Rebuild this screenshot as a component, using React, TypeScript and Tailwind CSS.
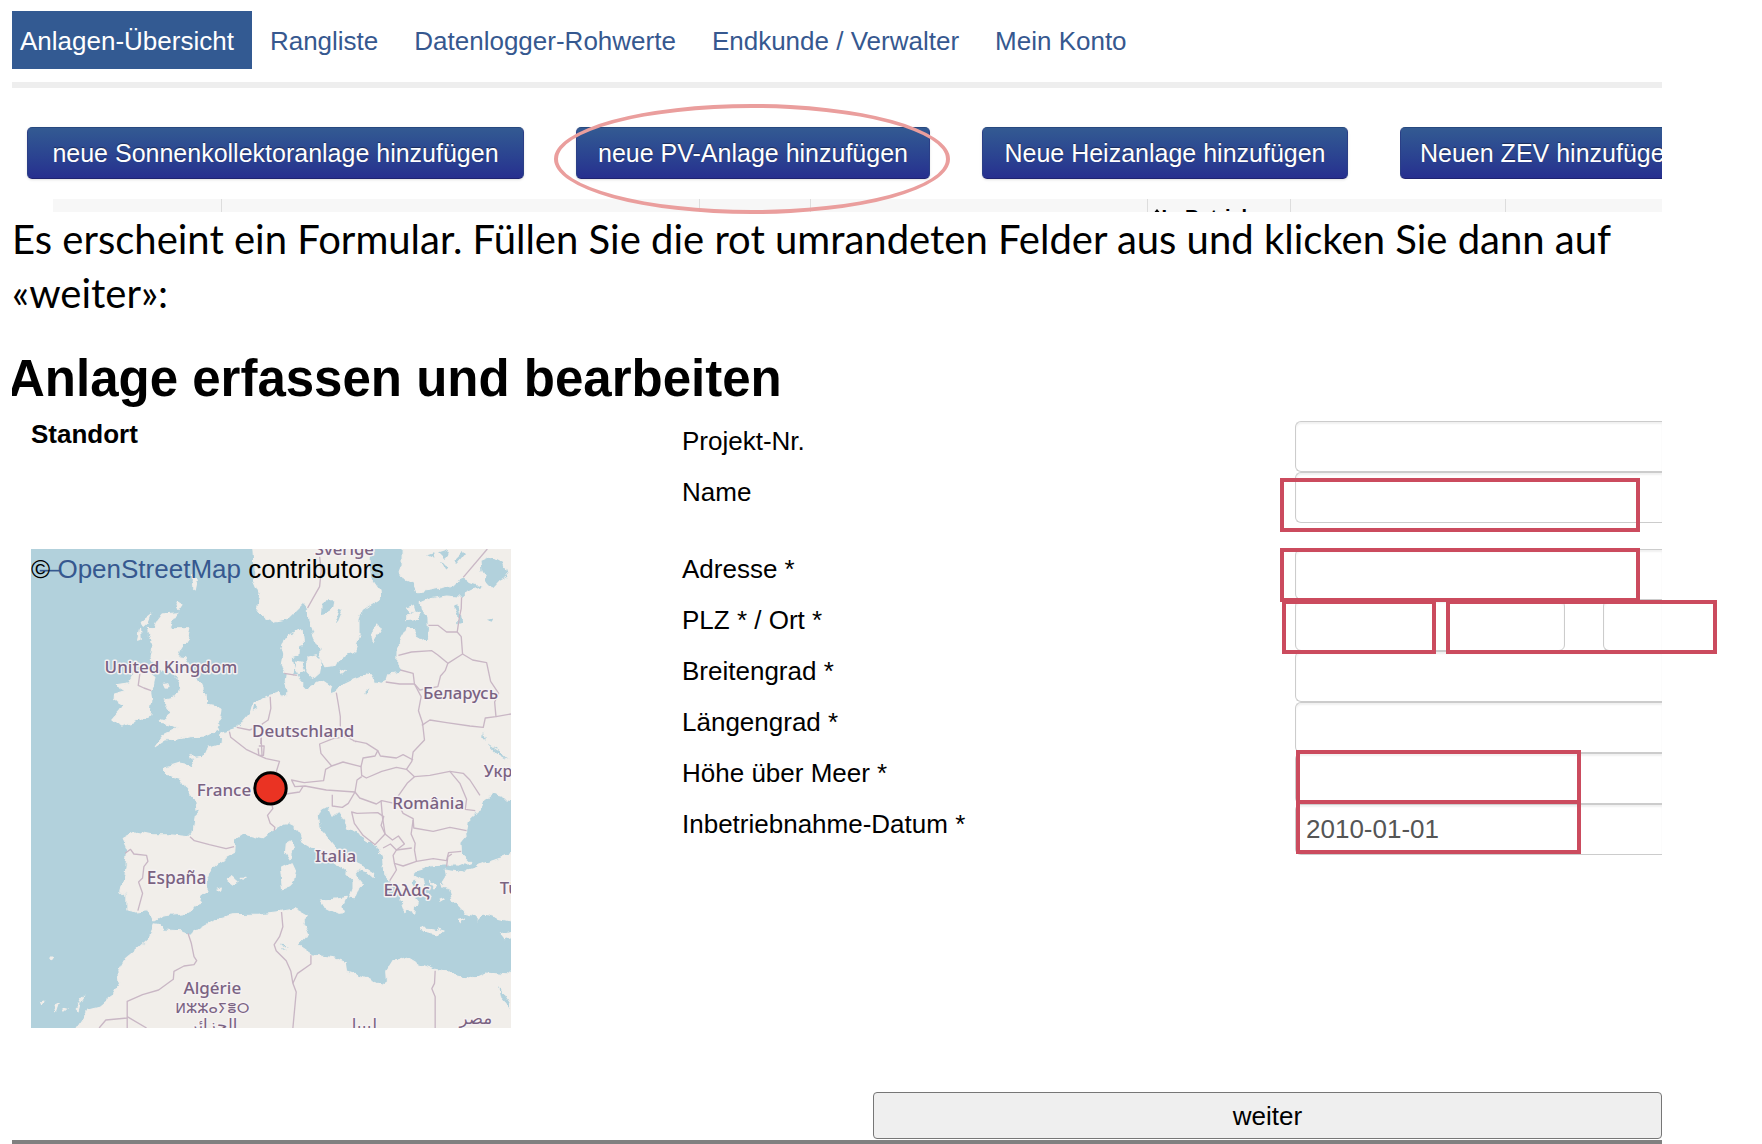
import React from "react";

const NAV = ["Anlagen-Übersicht", "Rangliste", "Datenlogger-Rohwerte", "Endkunde / Verwalter", "Mein Konto"];

const BUTTON =
  "h-[52px] whitespace-nowrap rounded-[5px] border border-t-[#27497f] border-x-[#2b3f86] border-b-[#1f2370] bg-linear-to-b from-[#335a92] to-[#272f8f] text-[25px] leading-8 text-white shadow-sm [text-shadow:0_-1px_1px_rgba(0,0,0,0.4)]";

const MARK = "pointer-events-none absolute z-10 border-4 border-[#cb4b5e]";

const INPUT =
  "block h-[51px] border border-[#cccccc] bg-transparent px-[10px] text-[26px] text-[#555555] shadow-[inset_0_2px_2px_rgba(0,0,0,0.06)] outline-none";

const SEA = "#b2d1dc";
const LAND = "#f1eeea";

const LAND_PATHS = [
  // continental Europe
  "M1147,20 L1147,70 L1138,96 L1152,120 L1180,132 L1190,155 L1230,150 L1290,137 L1330,117 L1352,128 L1392,140 L1360,150 L1338,160 L1325,172 L1280,168 L1232,176 L1204,188 L1208,215 L1224,230 L1226,270 L1222,296 L1202,302 L1190,286 L1180,268 L1160,262 L1142,295 L1135,330 L1134,372 L1143,396 L1108,402 L1103,420 L1085,430 L1063,426 L1058,408 L1040,405 L1005,418 L965,438 L948,456 L930,462 L936,440 L912,424 L880,434 L860,446 L840,424 L832,404 L815,405 L824,384 L818,352 L838,345 L840,318 L852,314 L848,268 L820,285 L794,296 L784,322 L790,346 L785,375 L800,400 L797,428 L806,455 L787,470 L780,456 L757,462 L735,468 L700,492 L692,520 L668,548 L640,570 L608,580 L605,610 L565,622 L552,652 L525,655 L512,640 L524,680 L480,672 L433,686 L445,706 L482,715 L500,745 L526,776 L530,812 L541,817 L528,830 L520,880 L510,890 L450,884 L400,884 L347,874 L309,895 L325,930 L318,1000 L305,1052 L320,1066 L320,1110 L352,1116 L385,1112 L400,1142 L412,1142 L432,1128 L508,1120 L528,1094 L544,1090 L548,1066 L566,1052 L556,1030 L572,990 L602,964 L646,940 L648,898 L672,882 L728,896 L760,872 L795,852 L808,852 L828,862 L842,880 L850,910 L895,936 L935,962 L975,992 L1000,1020 L1000,1046 L990,1074 L1004,1076 L1018,1040 L1028,1030 L1010,1008 L1024,990 L1042,996 L1060,1012 L1062,1000 L1040,985 L1010,970 L990,956 L968,945 L945,918 L922,888 L903,868 L896,832 L905,810 L928,798 L940,826 L954,812 L974,836 L990,866 L1030,890 L1075,920 L1088,950 L1092,1000 L1112,1022 L1130,1050 L1148,1090 L1158,1118 L1170,1108 L1182,1126 L1184,1100 L1198,1092 L1178,1066 L1200,1060 L1178,1030 L1185,1015 L1215,1048 L1206,1020 L1180,1006 L1184,990 L1230,978 L1284,974 L1330,976 L1352,968 L1322,940 L1320,905 L1340,880 L1345,845 L1370,822 L1390,784 L1420,760 L1445,765 L1460,780 L1485,782 L1485,20 Z",
  // Scandinavia
  "M700,20 L704,90 L702,120 L722,165 L712,200 L738,232 L765,247 L800,240 L852,188 L866,205 L868,245 L884,290 L904,330 L904,358 L916,380 L950,376 L962,352 L1000,338 L1018,290 L1018,238 L1028,212 L1080,178 L1078,150 L1052,112 L1048,60 L1050,20 Z",
  // Anatolia
  "M1485,935 L1440,955 L1400,968 L1350,985 L1310,995 L1276,990 L1280,1008 L1270,1024 L1290,1050 L1300,1084 L1320,1100 L1334,1120 L1360,1126 L1376,1142 L1396,1122 L1440,1136 L1485,1146 Z",
  // Africa
  "M405,1154 L388,1196 L350,1230 L318,1256 L296,1296 L300,1330 L276,1372 L240,1402 L206,1410 L190,1440 L165,1475 L1485,1475 L1485,1304 L1400,1296 L1356,1316 L1290,1300 L1244,1290 L1196,1272 L1160,1250 L1120,1264 L1104,1290 L1106,1320 L1084,1336 L1040,1316 L984,1296 L980,1268 L945,1254 L880,1244 L836,1214 L856,1194 L864,1180 L850,1146 L866,1126 L848,1116 L830,1106 L785,1114 L720,1122 L640,1124 L590,1136 L558,1156 L515,1180 L488,1172 L435,1170 L418,1156 Z",
  // Great Britain
  "M428,222 L476,218 L462,240 L452,266 L512,266 L504,298 L484,328 L478,350 L500,354 L514,380 L520,408 L545,430 L560,462 L562,490 L590,494 L608,508 L604,535 L588,556 L598,570 L560,588 L515,590 L470,598 L438,600 L408,620 L440,578 L474,562 L452,552 L420,546 L454,520 L436,498 L440,480 L470,474 L482,440 L470,420 L472,402 L440,400 L418,385 L395,350 L404,318 L392,310 L400,295 L384,282 L382,268 L404,272 L410,246 Z",
  // Ireland
  "M344,400 L385,392 L410,412 L406,434 L394,452 L398,480 L392,525 L345,545 L302,558 L278,540 L300,515 L312,495 L285,480 L286,462 L320,452 L290,434 L330,428 Z",
  "M395,222 L386,248 L372,262 L366,244 Z",
  "M364,268 L366,295 L358,298 Z",
  "M475,186 L488,194 L476,212 L470,200 Z",
  "M520,110 L534,120 L528,150 L516,138 Z",
  "M432,430 L446,428 L438,442 Z",
  // Danish and Swedish islands
  "M830,366 L848,370 L856,392 L838,404 L826,388 Z",
  "M862,352 L890,344 L905,366 L900,396 L882,412 L862,392 Z",
  "M1074,252 L1082,266 L1060,302 L1054,280 Z",
  "M1024,284 L1008,332 L1004,336 L1016,290 Z",
  "M962,388 L974,394 L966,400 Z",
  "M1158,222 L1188,214 L1202,222 L1180,240 L1158,242 Z",
  "M1160,204 L1184,196 L1188,210 L1168,214 Z",
  // Mediterranean islands
  "M816,902 L822,930 L812,958 L798,936 L800,912 Z",
  "M818,968 L828,990 L822,1026 L808,1040 L792,1046 L786,984 Z",
  "M902,1080 L940,1078 L980,1072 L970,1096 L974,1118 L955,1120 L915,1100 Z",
  "M1204,1164 L1240,1166 L1276,1176 L1250,1184 L1210,1176 Z",
  "M1444,1182 L1485,1170 L1485,1188 L1455,1196 Z",
  "M624,1022 L642,1010 L656,1022 L644,1036 Z",
  "M596,1048 L606,1044 L604,1054 Z",
  "M665,1012 L680,1012 L674,1018 Z",
  "M1318,1138 L1334,1134 L1322,1150 Z",
  "M1228,1024 L1250,1036 L1244,1046 Z",
  "M1262,1030 L1280,1036 L1266,1042 Z",
  "M1222,1060 L1234,1066 L1226,1072 Z",
  "M1258,1070 L1270,1078 L1260,1084 Z",
  // Canary Islands and Madeira
  "M92,1254 L104,1254 L98,1262 Z",
  "M102,1396 L118,1388 L110,1412 Z",
  "M130,1404 L144,1408 L136,1416 Z",
  "M174,1404 L186,1388 L180,1410 Z",
  "M184,1376 L196,1372 L188,1384 Z",
  "M70,1382 L78,1380 L74,1392 Z",
];

const LAKES = [
  "M904,222 L906,196 L922,184 L944,184 L940,206 L916,220 Z",
  "M962,206 L970,210 L954,250 L946,256 Z",
  "M1382,62 L1410,50 L1450,72 L1462,110 L1440,122 L1420,144 L1400,120 L1384,92 Z",
  "M1302,200 L1316,196 L1324,246 L1312,250 L1312,222 Z",
  "M1404,236 L1424,232 L1418,242 Z",
  "M1392,570 L1398,600 L1390,590 Z",
  "M1404,612 L1440,636 L1466,660 L1430,640 Z",
  "M1255,40 L1285,30 L1275,60 Z",
  "M1300,60 L1330,30 L1338,40 L1312,72 Z",
  "M1260,66 L1286,80 L1274,90 Z",
  "M1222,46 L1240,40 L1244,56 Z",
  "M1440,1340 L1452,1360 L1473,1396 L1473,1406 L1448,1376 Z",
  "M1034,458 L1050,444 L1036,464 Z",
  "M704,496 L714,504 L700,512 Z",
  "M1302,985 L1330,972 L1374,982 L1340,992 Z",
  "M784,1214 L812,1216 L790,1220 Z",
  "M784,1228 L804,1230 L788,1232 Z",
];

const BORDERS = [
  "M362,400 L357,436 L374,444 L396,452",
  "M900,50 L905,90 L900,140 L880,175 L864,204",
  "M1402,27 L1330,112",
  "M1325,172 L1324,205 L1318,235 L1312,276 L1280,276 L1254,256 L1226,256",
  "M1312,276 L1324,290 L1328,342 L1284,370 L1254,345 L1236,332 L1175,336 L1136,346",
  "M1328,342 L1358,360 L1400,368 L1412,424 L1436,460 L1424,486 L1428,530 L1396,534 L1390,562 L1350,558 L1280,548 L1230,540 L1206,556",
  "M1428,530 L1473,522",
  "M1284,370 L1276,392 L1262,408 L1254,440 L1200,450 L1184,432 L1180,400 L1142,390",
  "M1098,426 L1140,432 L1184,432 L1204,470 L1196,512 L1208,548 L1214,600 L1180,636 L1176,664 L1160,688",
  "M794,400 L832,406",
  "M950,458 L956,492 L962,530 L962,560",
  "M1000,602 L1040,610 L1074,632 L1066,648 L1030,654 L1024,680 L970,666 L936,678 L904,640 L900,612 L940,596 L980,590 L1010,606",
  "M1074,632 L1082,648 L1130,654 L1150,644 L1180,660",
  "M1024,680 L1026,706 L1040,714 L1086,694 L1130,682 L1160,688 L1184,710 L1162,730 L1134,770 L1124,790 L1086,782 L1070,792 L1020,774 L1006,756 L1012,720 L1026,710",
  "M936,678 L918,688 L912,722 L854,728 L816,720 L826,740 L856,738 L920,750 L1006,756 L986,790 L968,802 L938,798 L938,764",
  "M752,470 L754,505 L746,540 L728,552 L724,612",
  "M630,575 L634,592 L680,628 L718,646 L740,656 L780,664 L770,696",
  "M718,618 L734,618 L732,646 L718,646 L716,625",
  "M652,562 L690,570 L724,558",
  "M724,580 L728,650",
  "M785,778 L800,762 L840,756 L850,740",
  "M756,790 L760,806 L744,826 L752,850 L766,862 L764,872",
  "M512,890 L525,902 L570,914 L620,926 L644,920",
  "M318,940 L334,928 L344,942 L382,946 L386,964 L374,980 L370,1014 L358,1026 L370,1060 L356,1112",
  "M1184,710 L1230,706 L1290,694 L1320,730 L1340,778 L1336,808 L1366,812",
  "M1290,694 L1330,700 L1350,720 L1380,766",
  "M1134,790 L1150,820 L1180,836 L1182,864 L1240,874 L1290,862 L1340,872",
  "M1180,840 L1174,882 L1186,910 L1184,930 L1190,964 L1240,956 L1280,962 L1286,938 L1324,934",
  "M996,816 L1012,820 L1074,818 L1092,830 L1084,856 L1096,882 L1066,914 L1030,886 L1004,850 Z",
  "M1084,782 L1088,830 L1096,882 L1118,900 L1136,888 L1154,912 L1130,930 L1112,912 L1090,924",
  "M1130,930 L1120,946 L1124,970 L1150,978 L1190,964 M1130,930 L1176,924",
  "M1124,970 L1130,990 L1110,1022",
  "M1280,980 L1284,950 L1296,942",
  "M506,1180 L516,1210 L524,1250 L532,1262 L524,1274 L494,1278 L464,1294 L462,1318 L418,1350 L370,1364 L324,1384 L324,1464",
  "M324,1430 L382,1464 M324,1434 L260,1440 L240,1464",
  "M786,1116 L790,1160 L780,1190 L764,1214 L770,1232 L800,1262 L814,1294 L820,1330 L830,1356 L820,1464",
  "M820,1330 L834,1300 L874,1272 L874,1246",
  "M1246,1292 L1244,1330 L1236,1346 L1246,1370 L1246,1464",
];

const PLACES: [string, number, number, number][] = [
  ["Sverige", 974, 44, 50],
  ["United Kingdom", 455, 400, 51],
  ["Беларусь", 1322, 478, 50],
  ["Deutschland", 851, 590, 51],
  ["Укр", 1434, 712, 48],
  ["France", 614, 769, 51],
  ["România", 1225, 807, 51],
  ["Italia", 948, 966, 51],
  ["España", 472, 1032, 52],
  ["Ελλάς", 1161, 1068, 51],
  ["Tü", 1468, 1062, 50],
  ["Algérie", 579, 1362, 51],
  ["ⵍⵣⵣⴰⵢⴻⵔ", 579, 1418, 43],
  ["الجزائر", 582, 1474, 50],
  ["ليبيا", 1034, 1474, 50],
  ["مصر", 1368, 1452, 50],
];

function EuropeMap() {
  return (
    <div className="relative h-[479px] w-[480px] overflow-hidden">
      <svg viewBox="36 27 1437 1437" preserveAspectRatio="none" className="block size-full" aria-hidden="true">
        <defs>
          <filter id="coast" filterUnits="userSpaceOnUse" x="0" y="0" width="1500" height="1500">
            <feTurbulence type="fractalNoise" baseFrequency="0.035" numOctaves="2" seed="4" />
            <feDisplacementMap in="SourceGraphic" scale="22" xChannelSelector="R" yChannelSelector="G" />
          </filter>
        </defs>
        <rect x="36" y="27" width="1437" height="1437" fill={SEA} />
        <g filter="url(#coast)">
          <g fill={LAND} stroke={LAND} strokeWidth="3" strokeLinejoin="round">
            {LAND_PATHS.map((d) => (
              <path key={d} d={d} />
            ))}
          </g>
          <g fill={SEA}>
            {LAKES.map((d) => (
              <path key={d} d={d} />
            ))}
          </g>
        </g>
        <g fill="none" stroke="#c9b7c5" strokeWidth="4" strokeLinejoin="round">
          {BORDERS.map((d) => (
            <path key={d} d={d} />
          ))}
        </g>
        <g
          fill="#7a6282"
          stroke="#f5f1f2"
          strokeWidth="9"
          strokeLinejoin="round"
          textAnchor="middle"
          className="font-['Noto_Sans','DejaVu_Sans',sans-serif] font-medium [paint-order:stroke]"
        >
          {PLACES.map(([name, x, y, size]) => (
            <text key={name} x={x} y={y} fontSize={size}>
              {name}
            </text>
          ))}
        </g>
        <path d="M62,92 H126" stroke="#36588f" strokeWidth="5" />
        <circle cx="753" cy="745" r="47" fill="#ea3323" stroke="#000" strokeWidth="9" />
      </svg>
      <p className="absolute left-0 top-1 whitespace-nowrap text-[26px] leading-8">
        ©{" "}
        <a href="#osm" className="text-[#36588f]">
          OpenStreetMap
        </a>{" "}
        contributors
      </p>
    </div>
  );
}

function Field({
  id,
  label,
  value = "",
  mark,
  className = "",
}: {
  id: string;
  label: string;
  value?: string;
  mark?: string;
  className?: string;
}) {
  return (
    <div className={`grid grid-cols-[613fr_367fr] ${className}`}>
      <label htmlFor={id} className="pt-1 leading-8">
        {label}
      </label>
      <div className="relative">
        <input id={id} type="text" defaultValue={value} className={`${INPUT} w-full rounded-l-[6px] border-r-0`} />
        {mark && <span aria-hidden="true" className={`${MARK} ${mark}`} />}
      </div>
    </div>
  );
}

export default function App() {
  return (
    <div className="bg-white pl-3 pr-[100px] pt-[11px] font-['Liberation_Sans',Arial,sans-serif] text-[26px] text-black">
      <nav className="flex gap-2.5 border-b-[6px] border-[#eeeeee] pb-[13px]">
        {NAV.map((item, i) => (
          <a
            key={item}
            href="#nav"
            className={`h-[58px] whitespace-nowrap pl-2 pr-[18px] leading-[60px] ${
              i === 0 ? "bg-[#335a92] text-white" : "text-[#36588f]"
            }`}
          >
            {item}
          </a>
        ))}
      </nav>

      <div className="mt-[39px] flex gap-[52px] pl-[15px]">
        <button type="button" className={`${BUTTON} w-[497px] shrink-0`}>
          neue Sonnenkollektoranlage hinzufügen
        </button>
        <div className="relative shrink-0">
          <button type="button" className={`${BUTTON} w-[354px]`}>
            neue PV-Anlage hinzufügen
          </button>
          <span
            aria-hidden="true"
            className="pointer-events-none absolute -left-[22px] -top-[23px] z-10 h-[110px] w-[396px] rounded-[50%] border-4 border-[#ea9e9d]"
          />
        </div>
        <button type="button" className={`${BUTTON} w-[366px] shrink-0`}>
          Neue Heizanlage hinzufügen
        </button>
        <div className="min-w-0 flex-1 overflow-hidden">
          <button type="button" className={`${BUTTON} px-[19px]`}>
            Neuen ZEV hinzufügen
          </button>
        </div>
      </div>

      <div className="ml-[41px] mt-5 h-[13px] overflow-hidden">
        <table className="w-full table-fixed border-collapse bg-[#f7f7f7]">
          <thead>
            <tr className="h-10 text-left align-top text-[20px] leading-6 [&>th]:border-l [&>th]:border-[#dddddd] [&>th:first-child]:border-l-0">
              <th className="w-[10.5%]" />
              <th className="w-[29.7%]" />
              <th className="w-[6.9%]" />
              <th className="w-[20.9%]" />
              <th className="w-[8.9%] pl-1 pt-[6px]">
                <span className="flex items-center whitespace-nowrap">
                  <svg viewBox="0 0 10 16" className="h-4 w-[10px]" aria-hidden="true">
                    <path d="M5 0 L10 6 H0 Z M5 16 L10 10 H0 Z" fill="#000" />
                  </svg>
                  In Betrieb
                </span>
              </th>
              <th className="w-[13.4%]" />
              <th />
            </tr>
          </thead>
        </table>
      </div>

      <p className="font-['Lato',sans-serif] text-[40px] leading-[54px]">
        Es erscheint ein Formular. Füllen Sie die rot umrandeten Felder aus und klicken Sie dann auf «weiter»:
      </p>

      <h1 className="mt-[31px] overflow-hidden -indent-1 text-[51px] font-bold leading-[56px]">
        Anlage erfassen und bearbeiten
      </h1>

      <form>
        <div className="mt-[14px] grid grid-cols-[651fr_980fr] pl-[19px]">
          <div>
            <h2 className="mb-[102px] font-bold leading-[26px]">Standort</h2>
            <EuropeMap />
          </div>

          <div>
            <Field id="projekt" label="Projekt-Nr." />
            <Field id="name" label="Name" mark="-left-[15px] top-[6px] h-[54px] w-[360px]" />
            <Field
              id="adresse"
              label="Adresse *"
              className="mt-[26px]"
              mark="-left-[15px] -top-px h-[54px] w-[360px]"
            />
            <div className="grid grid-cols-[613fr_367fr]">
              <label htmlFor="plz" className="pt-1 leading-8">
                PLZ * / Ort *
              </label>
              <div className="relative flex gap-[38px]">
                <input id="plz" type="text" className={`${INPUT} w-[270px] rounded-[6px]`} />
                <input
                  type="text"
                  aria-label="Ort"
                  className={`${INPUT} w-0 min-w-0 flex-1 rounded-l-[6px] border-r-0`}
                />
                <span aria-hidden="true" className={`${MARK} -left-[13px] top-0 h-[54px] w-[154px]`} />
                <span aria-hidden="true" className={`${MARK} left-[151px] top-0 h-[54px] w-[271px]`} />
              </div>
            </div>
            <Field id="breite" label="Breitengrad *" />
            <Field id="laenge" label="Längengrad *" />
            <Field id="hoehe" label="Höhe über Meer *" mark="left-px -top-[3px] h-[54px] w-[285px]" />
            <Field
              id="datum"
              label="Inbetriebnahme-Datum *"
              value="2010-01-01"
              mark="left-px -top-1 h-[54px] w-[285px]"
            />
          </div>
        </div>

        <div className="mt-16 flex justify-end border-b-4 border-[#808080] pb-px">
          <button
            type="submit"
            className="h-[47px] w-[789px] rounded-[4px] border border-[#767676] bg-[#efefef] leading-8"
          >
            weiter
          </button>
        </div>
      </form>
    </div>
  );
}
